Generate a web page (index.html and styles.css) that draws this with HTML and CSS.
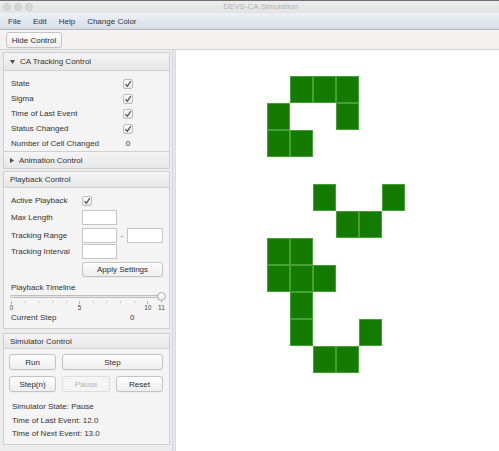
FILE: index.html
```html
<!DOCTYPE html>
<html lang="en">
<head>
<meta charset="utf-8">
<title>DEVS-CA Simulation</title>
<link rel="stylesheet" href="styles.css">
</head>
<body>
<div class="window">
  <div class="titlebar">
    <div class="lights"><span class="light"></span><span class="light"></span><span class="light"></span></div>
    <div class="title">DEVS-CA Simulation</div>
  </div>
  <div class="menubar">
    <span class="menu-item">File</span>
    <span class="menu-item">Edit</span>
    <span class="menu-item">Help</span>
    <span class="menu-item">Change Color</span>
  </div>
  <div class="toolbar">
    <button class="btn btn-hide">Hide Control</button>
  </div>
  <div class="main">
    <div class="side">
      <section class="pane">
        <div class="pane-head head-tall">
          <svg class="arrow" width="5" height="4" viewBox="0 0 5 4"><path d="M0 0H5L2.5 4Z" fill="#4a4a4a"/></svg>
          <span>CA Tracking Control</span>
        </div>
        <div class="track-body">
          <span>State</span><span class="check"><svg width="8" height="8" viewBox="0 0 8 8"><path d="M1.5 4.2L3.3 6.3L6.8 1.2" fill="none" stroke="#4a4a4a" stroke-width="1.2"/></svg></span>
          <span>Sigma</span><span class="check"><svg width="8" height="8" viewBox="0 0 8 8"><path d="M1.5 4.2L3.3 6.3L6.8 1.2" fill="none" stroke="#4a4a4a" stroke-width="1.2"/></svg></span>
          <span>Time of Last Event</span><span class="check"><svg width="8" height="8" viewBox="0 0 8 8"><path d="M1.5 4.2L3.3 6.3L6.8 1.2" fill="none" stroke="#4a4a4a" stroke-width="1.2"/></svg></span>
          <span>Status Changed</span><span class="check"><svg width="8" height="8" viewBox="0 0 8 8"><path d="M1.5 4.2L3.3 6.3L6.8 1.2" fill="none" stroke="#4a4a4a" stroke-width="1.2"/></svg></span>
          <span>Number of Cell Changed</span><span class="count">0</span>
        </div>
      </section>
      <section class="pane pane-collapsed">
        <div class="pane-head head-short">
          <svg class="arrow arrow-right" width="4" height="5" viewBox="0 0 4 5"><path d="M0 0V5L4 2.5Z" fill="#4a4a4a"/></svg>
          <span>Animation Control</span>
        </div>
      </section>
      <section class="pane pane-playback">
        <div class="pane-head head-plain">Playback Control</div>
        <div class="playback-body">
          <div class="form">
            <span class="lbl">Active Playback</span>
            <span class="ctl"><span class="check"><svg width="8" height="8" viewBox="0 0 8 8"><path d="M1.5 4.2L3.3 6.3L6.8 1.2" fill="none" stroke="#4a4a4a" stroke-width="1.2"/></svg></span></span>
            <span class="lbl">Max Length</span>
            <span class="ctl"><input class="field" type="text"></span>
            <span class="lbl gap3">Tracking Range</span>
            <span class="ctl gap3"><input class="field" type="text"><span class="dash">-</span><input class="field field-wide" type="text"></span>
            <span class="lbl">Tracking Interval</span>
            <span class="ctl"><input class="field" type="text"></span>
            <span class="lbl gap3"></span>
            <span class="ctl gap3"><button class="btn btn-apply">Apply Settings</button></span>
          </div>
          <div class="timeline-label">Playback Timeline</div>
          <div class="slider">
            <div class="track"></div>
            <div class="thumb"></div>
          </div>
          <div class="ticks">
            <span class="tick major"></span><span class="tick"></span><span class="tick"></span><span class="tick"></span><span class="tick"></span>
            <span class="tick major"></span><span class="tick"></span><span class="tick"></span><span class="tick"></span><span class="tick"></span>
            <span class="tick major"></span><span class="tick"></span>
          </div>
          <div class="tick-labels">
            <span class="tl">0</span><span class="tl"></span><span class="tl"></span><span class="tl"></span><span class="tl"></span>
            <span class="tl">5</span><span class="tl"></span><span class="tl"></span><span class="tl"></span><span class="tl"></span>
            <span class="tl">10</span><span class="tl">11</span>
          </div>
          <div class="current-step"><span>Current Step</span><span>0</span></div>
        </div>
      </section>
      <section class="pane pane-sim">
        <div class="pane-head head-sim">Simulator Control</div>
        <div class="sim-body">
          <div class="sim-buttons">
            <button class="btn btn-run">Run</button>
            <button class="btn btn-step">Step</button>
            <button class="btn">Step(n)</button>
            <button class="btn btn-disabled">Pause</button>
            <button class="btn">Reset</button>
          </div>
          <div class="sim-info">
            <div>Simulator State: Pause</div>
            <div>Time of Last Event: 12.0</div>
            <div>Time of Next Event: 13.0</div>
          </div>
        </div>
      </section>
    </div>
    <div class="divider"></div>
    <div class="canvas">
      <div class="cell" style="grid-area: 1 / 2"></div>
      <div class="cell" style="grid-area: 1 / 3"></div>
      <div class="cell" style="grid-area: 1 / 4"></div>
      <div class="cell" style="grid-area: 2 / 1"></div>
      <div class="cell" style="grid-area: 2 / 4"></div>
      <div class="cell" style="grid-area: 3 / 1"></div>
      <div class="cell" style="grid-area: 3 / 2"></div>
      <div class="cell" style="grid-area: 5 / 3"></div>
      <div class="cell" style="grid-area: 5 / 6"></div>
      <div class="cell" style="grid-area: 6 / 4"></div>
      <div class="cell" style="grid-area: 6 / 5"></div>
      <div class="cell" style="grid-area: 7 / 1"></div>
      <div class="cell" style="grid-area: 7 / 2"></div>
      <div class="cell" style="grid-area: 8 / 1"></div>
      <div class="cell" style="grid-area: 8 / 2"></div>
      <div class="cell" style="grid-area: 8 / 3"></div>
      <div class="cell" style="grid-area: 9 / 2"></div>
      <div class="cell" style="grid-area: 10 / 2"></div>
      <div class="cell" style="grid-area: 10 / 5"></div>
      <div class="cell" style="grid-area: 11 / 3"></div>
      <div class="cell" style="grid-area: 11 / 4"></div>
    </div>
  </div>
</div>
</body>
</html>
```

FILE: styles.css
```css
* { box-sizing: border-box; }

html, body {
  margin: 0;
  padding: 0;
}

body {
  width: 499px;
  height: 451px;
  overflow: hidden;
  font-family: "Liberation Sans", Arial, sans-serif;
  font-size: 8px;
  color: #333333;
  background: #ececec;
}

.window {
  display: flex;
  flex-direction: column;
  height: 451px;
}

/* title bar */
.titlebar {
  height: 13px;
  border-top: 1px solid #6e6e6e;
  background: linear-gradient(#ececec, #e3e3e3);
  display: flex;
  align-items: center;
}

.lights {
  display: flex;
  gap: 3px;
  padding-left: 3px;
}

.light {
  width: 8px;
  height: 8px;
  border-radius: 50%;
  background: #d6d6d6;
  border: 1px solid #cdcdcd;
}

.title {
  flex: 1;
  text-align: center;
  color: #b3b3b3;
  padding-right: 11px;
  line-height: 12px;
}

/* menu */
.menubar {
  height: 17px;
  background: linear-gradient(#eef1f7, #d6dce6);
  border-bottom: 1px solid #b7bcc5;
  display: flex;
  align-items: center;
  gap: 12px;
  padding-left: 8px;
  padding-top: 1px;
  color: #333;
}

/* toolbar */
.toolbar {
  height: 20px;
  background: #f3f2f1;
  border-bottom: 1px solid #d4d4d4;
  padding: 2px 0 0 6px;
}

.btn {
  font-family: inherit;
  font-size: 8px;
  color: #2a2a2a;
  height: 16px;
  padding: 0;
  border: 1px solid #c3c3c3;
  border-radius: 3px;
  background: linear-gradient(#fdfdfd, #eeeeee);
  box-shadow: 0 0.5px 0 rgba(0, 0, 0, 0.08);
}

.btn-hide {
  width: 56px;
  height: 16px;
}

/* main split */
.main {
  flex: 1;
  display: flex;
  min-height: 0;
}

.side {
  width: 172px;
  padding: 2px 2px 0 3px;
  display: flex;
  flex-direction: column;
  background: #ececec;
}

.divider {
  width: 4px;
  background: linear-gradient(to right, #c8cdd7, #e2e7f0 35%, #e2e7f0 65%, #cfd5e1);
}

.canvas {
  flex: 1;
  background: #ffffff;
  display: grid;
  grid-template-columns: repeat(6, 23px);
  grid-auto-rows: 27px;
  align-content: start;
  padding: 26px 0 0 91px;
}

.cell {
  background: #137b00;
  border: 1px solid #45a035;
}

/* panes */
.pane {
  border: 1px solid #cfcfcf;
  background: #f4f4f4;
}

.pane-head {
  display: flex;
  align-items: center;
  padding-left: 6px;
  background: linear-gradient(#f4f4f4, #e7e7e7);
  color: #333;
}

.head-tall {
  height: 18px;
  border-bottom: 1px solid #d2d2d2;
}

.arrow {
  margin-right: 5px;
}

.arrow-right {
  margin-right: 5px;
}

.pane-collapsed {
  border-top: 0;
}

.head-short {
  height: 16px;
}

.head-plain {
  height: 16px;
  border-bottom: 1px solid #d2d2d2;
}

.head-sim {
  height: 15px;
  border-bottom: 1px solid #d2d2d2;
}

.pane-playback {
  margin-top: 2px;
}

.pane-sim {
  margin-top: 4px;
}

/* tracking body */
.track-body {
  display: grid;
  grid-template-columns: 112px 10px;
  grid-auto-rows: 15px;
  align-items: center;
  padding: 5px 0 0 7px;
}

.check {
  width: 10px;
  height: 10px;
  border: 1px solid #bcbcbc;
  border-radius: 2px;
  background: linear-gradient(#fbfbfb, #e8e8e8);
  display: flex;
  align-items: center;
  justify-content: center;
}

.count {
  text-align: center;
}

/* playback body */
.playback-body {
  padding: 5px 0 4px 7px;
}

.form {
  display: grid;
  grid-template-columns: 71px auto;
  grid-auto-rows: 15px;
  row-gap: 2px;
  align-items: center;
}

.gap3 {
  margin-top: 1px;
}

.ctl {
  display: flex;
  align-items: center;
  height: 15px;
}

.field {
  width: 35px;
  height: 15px;
  border: 1px solid #c5c5c5;
  background: #ffffff;
  margin: 0;
  padding: 0;
  font-size: 8px;
}

.field-wide {
  width: 36px;
}

.dash {
  width: 10px;
  text-align: center;
  color: #555;
}

.btn-apply {
  width: 81px;
  height: 15px;
}

.timeline-label {
  margin-top: 7px;
  height: 9px;
  line-height: 9px;
}

.slider {
  position: relative;
  margin-left: -1px;
  width: 156px;
  height: 9px;
  display: flex;
  align-items: center;
}

.track {
  width: 152px;
  height: 3px;
  border: 1px solid #bdbdbd;
  border-radius: 2px;
  background: #e4e4e4;
}

.thumb {
  position: absolute;
  right: 0;
  top: 0;
  width: 9px;
  height: 9px;
  border-radius: 50%;
  border: 1px solid #a9a9a9;
  background: linear-gradient(#ffffff, #e6e6e6);
}

.ticks {
  display: flex;
  justify-content: space-between;
  width: 151px;
  height: 3px;
  align-items: flex-start;
}

.tick {
  width: 1px;
  height: 2px;
  background: #c4c4c4;
}

.tick.major {
  height: 3px;
  background: #b5b5b5;
}

.tick-labels {
  display: flex;
  justify-content: space-between;
  width: 151px;
  height: 8px;
  font-size: 6.5px;
  line-height: 8px;
  color: #444;
}

.tl {
  width: 1px;
  display: flex;
  justify-content: center;
  white-space: nowrap;
}

.current-step {
  display: grid;
  grid-template-columns: 119px auto;
  height: 12px;
  line-height: 12px;
}

/* simulator body */
.sim-body {
  padding: 5px 0 3px 5px;
}

.sim-buttons {
  display: grid;
  grid-template-columns: 47px 48px 47px;
  grid-auto-rows: 16px;
  column-gap: 6px;
  row-gap: 6px;
}

.btn-step {
  grid-column: 2 / 4;
}

.btn-disabled {
  color: #b4b4b4;
  background: #f5f5f5;
  border-color: #dddddd;
  box-shadow: none;
}

.sim-info {
  margin-top: 8px;
  padding-left: 3px;
  line-height: 13.5px;
}
```
